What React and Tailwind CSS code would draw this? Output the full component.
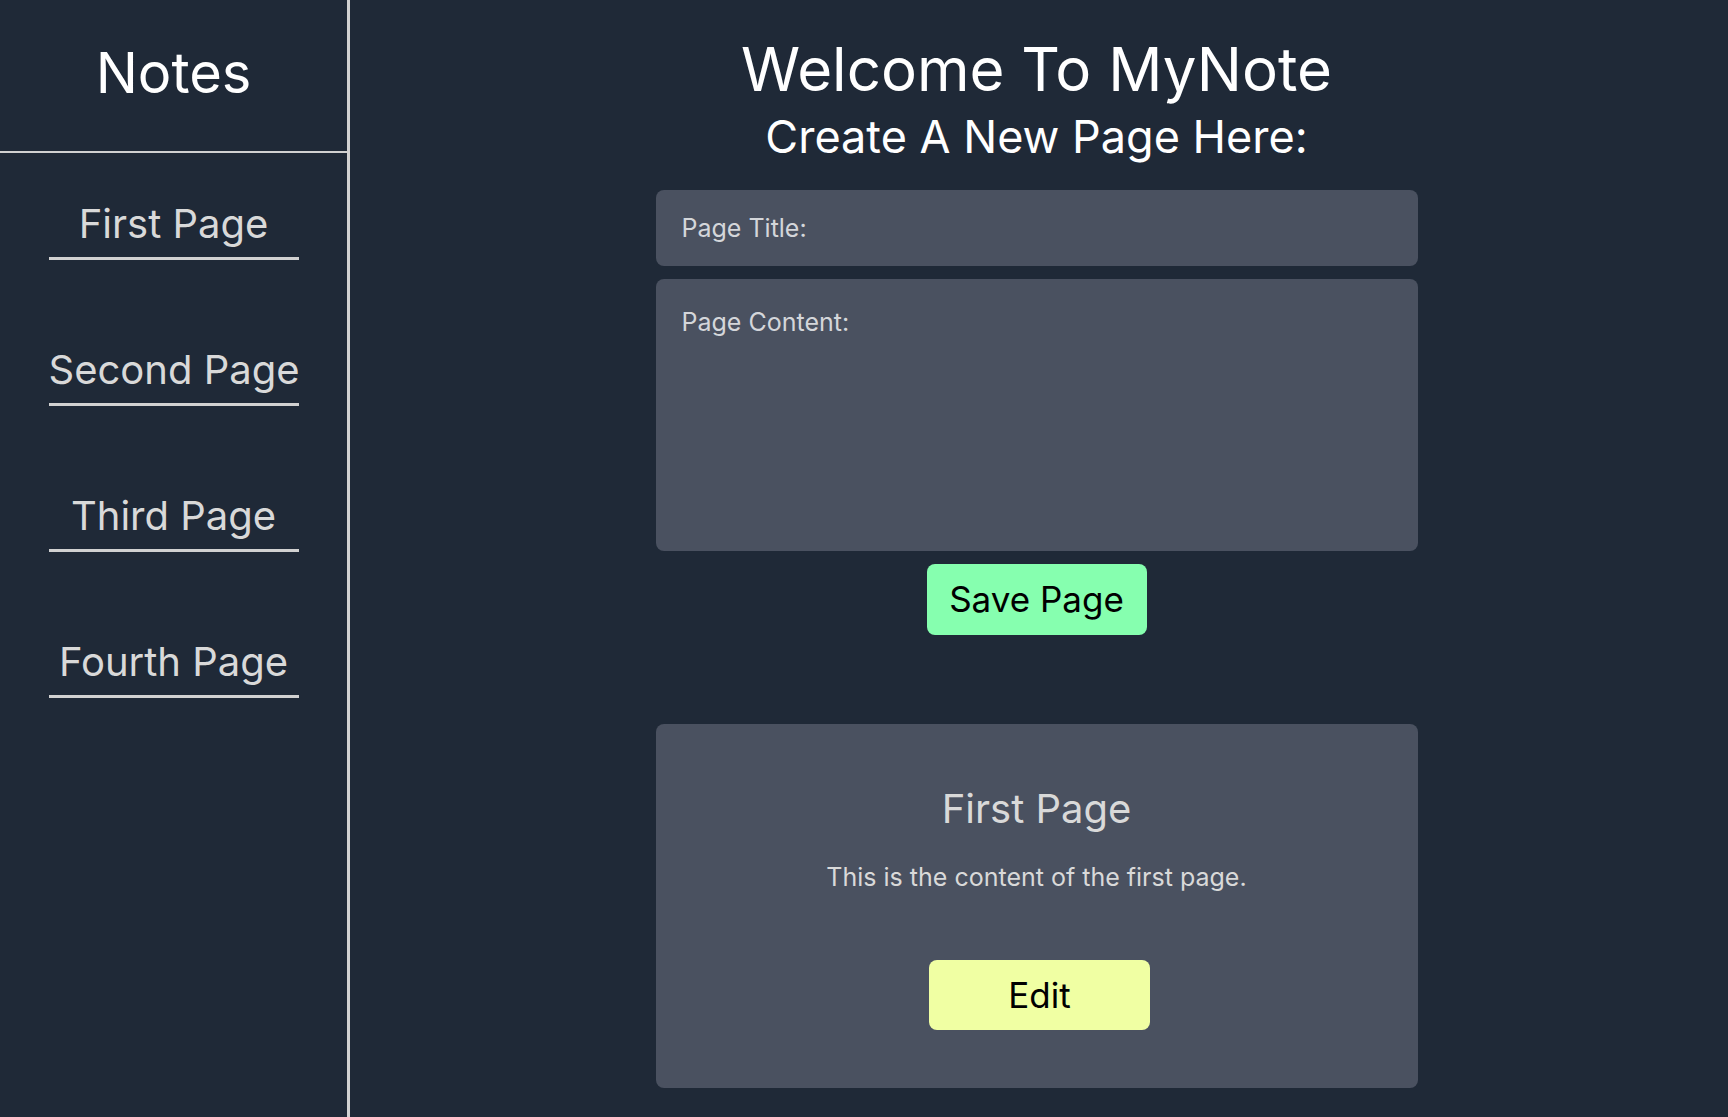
import { useState } from 'react';

const pages = [
  { title: 'First Page', content: 'This is the content of the first page.' },
  { title: 'Second Page', content: '' },
  { title: 'Third Page', content: '' },
  { title: 'Fourth Page', content: '' }
];

function Sidebar() {
  return (
    <aside className="w-[350px] shrink-0 min-h-screen border-r-[3px] border-[#d1d1d1] flex flex-col">
      {/* Header */}
      <div className="h-[153px] border-b-2 border-[#d1d1d1] flex justify-center">
        <h1 className="mt-[41px] text-[56px] leading-[64px] text-white">Notes</h1>
      </div>

      {/* Page links */}
      <nav className="flex flex-col items-center gap-[86px] mt-[47px]">
        {pages.map((page) => (
          <a
            key={page.title}
            href="#"
            className="w-[250px] whitespace-nowrap text-center text-[40px] leading-[48px] pb-[9px] border-b-[3px] border-[#d1d1d1] text-[#d9d9d9]"
          >
            {page.title}
          </a>
        ))}
      </nav>
    </aside>
  );
}

function App() {
  const [title, setTitle] = useState('');
  const [content, setContent] = useState('');

  return (
    <div
      className="min-h-screen bg-[#1f2937] flex"
      style={{ fontFamily: 'Inter, "Noto Sans", sans-serif' }}
    >
      <Sidebar />

      <main className="flex-1 flex flex-col items-center pt-[39px] pb-[29px] pr-[5px]">
        <h1 className="text-[60px] leading-[60px] text-white">Welcome To MyNote</h1>
        <h2 className="mt-[12px] text-[45px] leading-[52px] text-white">
          Create A New Page Here:
        </h2>

        {/* New page form */}
        <form className="w-[762px] mt-[27px] flex flex-col items-center gap-[13px]">
          <input
            value={title}
            onChange={(e) => setTitle(e.target.value)}
            placeholder="Page Title:"
            className="w-full h-[76px] rounded-lg bg-[#4a5160] px-[26px] text-[25px] leading-[32px] text-[#e5e7eb] placeholder:text-[#d4d6da] outline-none"
          />
          <textarea
            value={content}
            onChange={(e) => setContent(e.target.value)}
            placeholder="Page Content:"
            className="w-full h-[272px] rounded-lg bg-[#4a5160] px-[26px] pt-[27px] text-[25px] leading-[32px] text-[#e5e7eb] placeholder:text-[#d4d6da] outline-none resize-none"
          />
          <button
            type="button"
            className="w-[220px] h-[71px] rounded-lg bg-[#86ffaf] text-black text-[35px] leading-none"
          >
            Save Page
          </button>
        </form>

        {/* Page card */}
        <div className="w-[762px] mt-[89px] h-[364px] rounded-lg bg-[#4a5160] flex flex-col items-center pt-[61px]">
          <h3 className="text-[40px] leading-[48px] text-[#d9d9d9]">{pages[0].title}</h3>
          <p className="mt-[28px] text-[25px] leading-[32px] text-[#d9d9d9]">{pages[0].content}</p>
          <button
            type="button"
            className="mt-[67px] ml-[6px] w-[221px] h-[70px] rounded-lg bg-[#f0ffa3] text-black text-[35px] leading-none"
          >
            Edit
          </button>
        </div>
      </main>
    </div>
  );
}

export default App;
